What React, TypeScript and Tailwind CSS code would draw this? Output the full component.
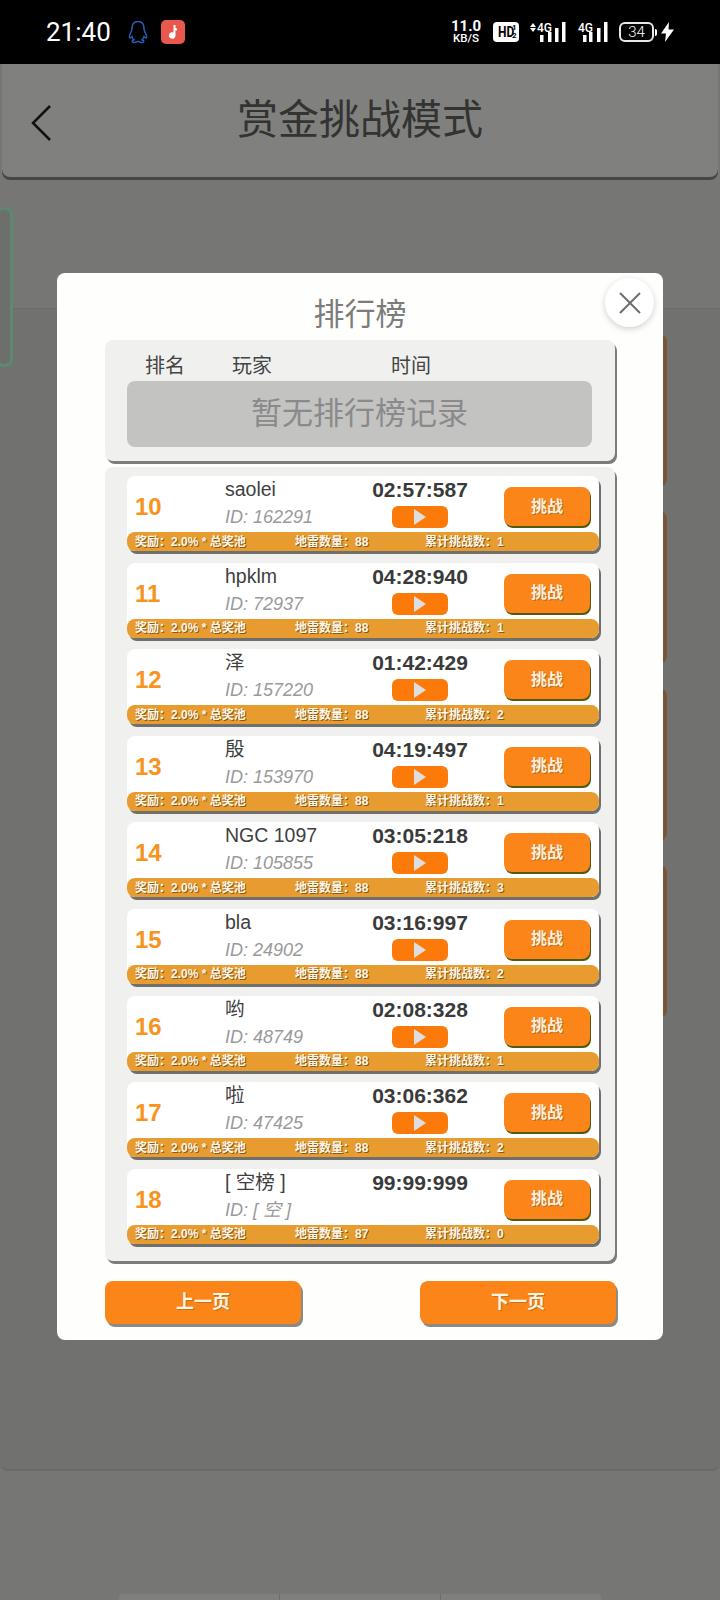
const CJK = 'font-["Liberation_Sans","Noto_Sans_CJK_SC",sans-serif]';

interface Row {
  rank: number;
  name: string;
  id: string;
  time: string;
  mines: number;
  tries: number;
  replay: boolean;
}

const rows: Row[] = [
  { rank: 10, name: 'saolei', id: '162291', time: '02:57:587', mines: 88, tries: 1, replay: true },
  { rank: 11, name: 'hpklm', id: '72937', time: '04:28:940', mines: 88, tries: 1, replay: true },
  { rank: 12, name: '泽', id: '157220', time: '01:42:429', mines: 88, tries: 2, replay: true },
  { rank: 13, name: '殷', id: '153970', time: '04:19:497', mines: 88, tries: 1, replay: true },
  { rank: 14, name: 'NGC 1097', id: '105855', time: '03:05:218', mines: 88, tries: 3, replay: true },
  { rank: 15, name: 'bla', id: '24902', time: '03:16:997', mines: 88, tries: 2, replay: true },
  { rank: 16, name: '哟', id: '48749', time: '02:08:328', mines: 88, tries: 1, replay: true },
  { rank: 17, name: '啦', id: '47425', time: '03:06:362', mines: 88, tries: 2, replay: true },
  { rank: 18, name: '[ 空榜 ]', id: '[ 空 ]', time: '99:99:999', mines: 87, tries: 0, replay: false },
];

function Bars({ xs }: { xs: number[] }) {
  const heights = [7, 10, 14, 20];
  return (
    <svg width="26" height="20" viewBox="0 0 26 20" fill="#fff" className="block">
      {xs.map((x, i) => (
        <rect key={x} x={x} y={20 - heights[i]} width="3.5" height={heights[i]} />
      ))}
    </svg>
  );
}

function StatusBar() {
  return (
    <div className="flex h-16 items-center bg-black pl-[46px] text-white">
      <span className='w-[63px] font-["Roboto",sans-serif] text-[26px] leading-none font-normal'>21:40</span>
      <svg width="22" height="24" viewBox="0 0 22 24" fill="none" stroke="#2a5cb8" strokeWidth="1.5" className="ml-[18px]">
        <path d="M11 1.5c-4 0-6 3-6 7 0 2-.6 3-1.6 5-1.4 2.8-1.2 4.5-.2 4.5.6 0 1.2-.6 1.8-1.4.4 1.4 1 2.400 2 3.200-1.400.6-2 1.200-1.600 2 .6 1 3 .8 5.600-.4 2.600 1.200 5 1.400 5.600.4.400-.8-.2-1.400-1.600-2 1-.8 1.600-1.800 2-3.200.6.800 1.200 1.400 1.800 1.400 1 0 1.200-1.700-.2-4.500-1-2-1.600-3-1.600-5 0-4-2-7-6-7z" />
      </svg>
      <div className="ml-[12px] flex h-6 w-6 items-center justify-center rounded-[5px] bg-[#e8584c]">
        <svg width="12" height="16" viewBox="0 0 12 16" fill="#fff">
          <path d="M6.500 1h2v2.500c0 .8.800 1 1.500 1v2c-.6 0-1-.100-1.500-.4V11.500a3.300 3.300 0 1 1-2-3z" />
        </svg>
      </div>
      <div className='mb-[1px] ml-[266px] flex w-[30px] flex-col items-center font-["Roboto",sans-serif] font-bold'>
        <span className="text-[15px] leading-[14px]">11.0</span>
        <span className="text-[11.500px] leading-[11px] font-medium">KB/S</span>
      </div>
      <div className='ml-[12px] flex h-5 w-[26px] items-center justify-center rounded-[4px] bg-white font-["Roboto",sans-serif] text-[15px] leading-none font-bold text-black'>
        <span className="scale-x-[0.8]">HD</span>
        <span className="-ml-[4px] flex flex-col text-[8px] leading-[8px]">
          <span>1</span>
          <span>2</span>
        </span>
      </div>
      <div className="ml-[11px] flex w-[6px] flex-col gap-[1px] self-start pt-[23px]">
        <div className="h-0 w-0 border-x-[3px] border-b-[4px] border-x-transparent border-b-white" />
        <div className="h-0 w-0 border-x-[3px] border-t-[4px] border-x-transparent border-t-white" />
      </div>
      <div className="relative ml-[1px] h-5 w-[30px]">
        <span className='absolute top-[1px] left-0 font-["Roboto",sans-serif] text-[12px] leading-[10px] font-medium'>4G</span>
        <div className="absolute top-0 left-[3px]">
          <Bars xs={[0, 8, 15, 22]} />
        </div>
      </div>
      <div className="relative ml-[11px] h-5 w-[30px]">
        <span className='absolute top-[1px] left-0 font-["Roboto",sans-serif] text-[12px] leading-[10px] font-medium'>4G</span>
        <div className="absolute top-0 left-[5px]">
          <Bars xs={[0, 6, 14, 21]} />
        </div>
      </div>
      <div className='ml-[11px] flex h-5 w-[35px] items-center justify-center rounded-[6px] border-2 border-[#e8e8e8] font-["Roboto",sans-serif] text-[15px] leading-none font-light'>34</div>
      <div className="ml-[1px] h-[7px] w-[2px] rounded-r-sm bg-white" />
      <svg width="13" height="20" viewBox="0 0 13 20" fill="#fff" className="ml-[4px]">
        <path d="M8 0 0 11.500h5L4 20l9-12.500H7.500z" />
      </svg>
    </div>
  );
}

function Backdrop() {
  return (
    <div className="relative h-[1536px] overflow-hidden bg-[#767674]">
      <div className="mx-[2px] flex h-[113px] items-center justify-center rounded-b-lg bg-[#80807e] shadow-[0_3px_0_#464644]">
        <svg width="24" height="38" viewBox="0 0 24 38" fill="none" stroke="#111" strokeWidth="2.500" className="absolute top-[40px] left-[30px]">
          <path d="M20 2 3 19l17 17" />
        </svg>
        <span className={`${CJK} text-[41px] leading-none text-[#333331]`}>赏金挑战模式</span>
      </div>
      <div className="mt-[131px] flex h-[1163px] flex-col items-end gap-[24px] rounded-b-lg border-t border-b-2 border-[#6a6a68] bg-[#71716f] pt-[25px] pr-[57px]">
        <div className="h-[153px] w-[60px] rounded-lg shadow-[4px_0_0_#7a5535]" />
        <div className="h-[153px] w-[60px] rounded-lg shadow-[4px_0_0_#7a5535]" />
        <div className="h-[153px] w-[60px] rounded-lg shadow-[4px_0_0_#7a5535]" />
        <div className="h-[153px] w-[60px] rounded-lg shadow-[4px_0_0_#7a5535]" />
      </div>
      <div className="absolute top-[143px] -left-[4px] h-[160px] w-[17px] rounded-lg border-[3px] border-[#5c8a70] bg-[#6e6e6c]" />
      <div className="mx-auto mt-[123px] flex h-[8px] w-[482px] rounded-t bg-[#7f7f7d]">
        <div className="flex-1 border-r border-[#6b6b69]" />
        <div className="flex-1 border-r border-[#6b6b69]" />
        <div className="flex-1" />
      </div>
    </div>
  );
}

function RankRow({ row }: { row: Row }) {
  return (
    <div className="flex h-[75px] flex-col rounded-lg bg-white shadow-[2px_3px_0_#6f6f6d]">
      <div className="flex h-[56px]">
        <div className='flex w-[98px] items-center pt-[6px] pl-[8px] font-["Liberation_Sans",sans-serif] text-[24px] font-bold text-[#f7931e]'>
          {row.rank}
        </div>
        <div className={`${CJK} w-[147px]`}>
          <div className="h-[27px] text-[19.500px] leading-[26px] text-[#3f3f3f]">{row.name}</div>
          <div className="text-[18px] leading-[28px] text-[#9a9a9a] italic">ID: {row.id}</div>
        </div>
        <div className='flex w-[96px] flex-col items-center font-["Liberation_Sans",sans-serif]'>
          <div className="mt-[2px] h-[26px] text-[21px] leading-[24px] font-bold text-[#3a3a3a]">{row.time}</div>
          {row.replay && (
            <div className="mt-[2px] flex h-[22px] w-[56px] items-center justify-center rounded-md bg-[#fc7a0a]">
              <svg width="12" height="16" viewBox="0 0 12 16" fill="#dedede">
                <path d="M0 0 12 8 0 16z" />
              </svg>
            </div>
          )}
        </div>
        <div className={`${CJK} mt-[11px] ml-[36px] flex h-[39px] w-[86px] items-center justify-center rounded-lg bg-[#fb8519] text-[16px] font-bold text-[#fdeedd] shadow-[1px_2px_0_#4d5c12] [text-shadow:1px_1px_0_#b9701f]`}>
          挑战
        </div>
      </div>
      <div className={`${CJK} flex h-[19px] items-center rounded-lg bg-[#e89c2f] pl-[8px] text-[12px] font-bold text-[#fff6e6] [text-shadow:1px_1px_0_#8a5a1a]`}>
        <span className="w-[160px]">奖励：2.0% * 总奖池</span>
        <span className="w-[130px]">地雷数量：{row.mines}</span>
        <span>累计挑战数：{row.tries}</span>
      </div>
    </div>
  );
}

function Modal() {
  return (
    <div className="absolute top-[273px] left-[57px] h-[1067px] w-[606px] rounded-lg bg-[#fefefc] px-[48px]">
      <button className="absolute top-[5px] right-[9px] flex h-[49px] w-[49px] items-center justify-center rounded-full bg-white shadow-[0_2px_6px_rgba(0,0,0,0.18)]">
        <svg width="22" height="22" viewBox="0 0 22 22" stroke="#6e6e6e" strokeWidth="2" fill="none">
          <path d="M1 1l20 20M21 1 1 21" />
        </svg>
      </button>
      <div className={`${CJK} h-[67px] pt-[23px] text-center text-[31px] leading-[38px] text-[#7c7c7c]`}>排行榜</div>
      <div className={`${CJK} h-[121px] w-[510px] rounded-lg bg-[#f0f1ee] shadow-[2px_3px_0_#7c7c78]`}>
        <div className="flex h-[41px] items-center pt-[10px] text-[20px] text-[#444]">
          <span className="ml-[40px] w-[87px]">排名</span>
          <span className="w-[159px]">玩家</span>
          <span>时间</span>
        </div>
        <div className="ml-[22px] flex h-[66px] w-[465px] items-center justify-center rounded-lg bg-[#c3c3c2] text-[31px] text-[#8a8a8a]">
          暂无排行榜记录
        </div>
      </div>
      <div className="mt-[6px] flex h-[794px] w-[510px] flex-col gap-[11.600px] rounded-lg bg-[#f0f1ee] pt-[9px] pr-[16px] pl-[22px] shadow-[2px_3px_0_#7c7c78]">
        {rows.map((row) => (
          <RankRow key={row.rank} row={row} />
        ))}
      </div>
      <div className={`${CJK} mt-[20px] flex w-[511px] justify-between text-[18px] font-bold text-[#fff3e2]`}>
        <div className="flex h-[43px] w-[196px] items-center justify-center rounded-lg bg-[#fb8519] shadow-[2px_3px_0_#8a8a86] [text-shadow:1px_1px_0_#c0761f]">上一页</div>
        <div className="flex h-[43px] w-[196px] items-center justify-center rounded-lg bg-[#fb8519] shadow-[2px_3px_0_#8a8a86] [text-shadow:1px_1px_0_#c0761f]">下一页</div>
      </div>
    </div>
  );
}

export default function App() {
  return (
    <div className="relative h-[1600px] w-[720px] overflow-hidden">
      <StatusBar />
      <Backdrop />
      <Modal />
    </div>
  );
}
